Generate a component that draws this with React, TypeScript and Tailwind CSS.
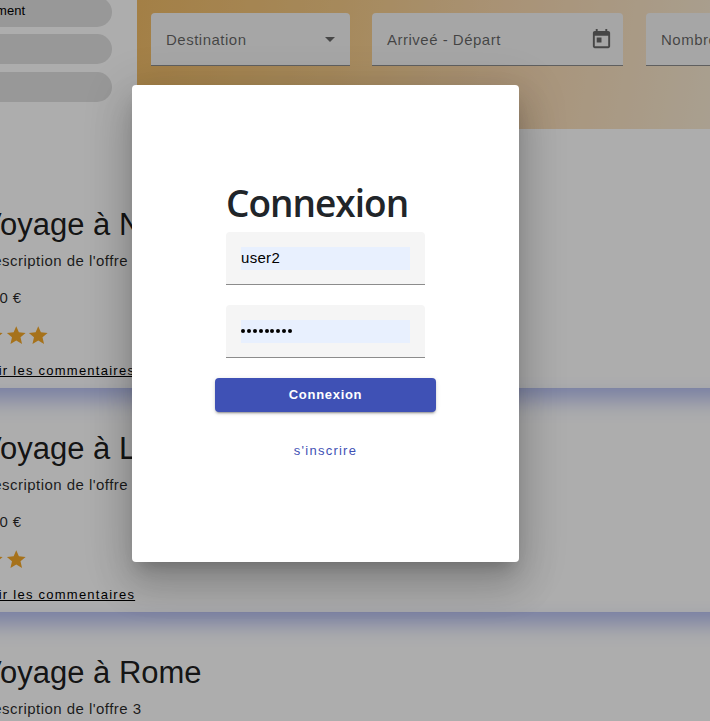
import React from "react";

function Star() {
  return (
    <svg viewBox="0 0 24 24" className="h-[23px] w-[22.5px] shrink-0" fill="#f5a829">
      <path d="M12 17.27L18.18 21l-1.64-7.03L22 9.24l-7.19-.61L12 2 9.19 8.63 2 9.24l5.46 4.73L5.82 21z" />
    </svg>
  );
}

interface OfferProps {
  title: string;
  description: string;
  price: string;
  stars: number;
}

function Offer({ title, description, price, stars }: OfferProps) {
  return (
    <article className="-mx-10 h-[224px] shrink-0 pt-[39px] pl-10 shadow-[0_12px_20px_#b3bdf1]">
      <div className="-ml-[18px] whitespace-nowrap text-black/85">
        <h2 className="-ml-px h-[44px] text-[31px] leading-[44px] text-black/90">{title}</h2>
        <p className="mt-[2px] h-[24px] text-[15px] leading-[24px] tracking-[0.46px]">{description}</p>
        <p className="mt-[13px] h-[24px] text-[15px] leading-[24px] tracking-[0.4px]">{price}</p>
        <div className="mt-[14px] flex h-[24px]">
          {Array.from({ length: stars }, (_, i) => (
            <Star key={i} />
          ))}
        </div>
        <a className="-ml-px mt-[14px] block h-[18px] text-[13px] leading-[18px] tracking-[1.25px] text-black underline decoration-1 underline-offset-[1px]">
          Voir les commentaires
        </a>
      </div>
    </article>
  );
}

function Pill({ children }: { children?: React.ReactNode }) {
  return (
    <div className="-ml-5 flex h-[30px] w-[132px] shrink-0 items-center rounded-r-full bg-[#e0e0e0] text-[13px] text-black">
      {children}
    </div>
  );
}

const field = "flex h-[53px] shrink-0 items-center rounded-t border-b border-[#8c8c8c] bg-[#f5f5f5] px-[15px]";

export default function App() {
  return (
    <div className="relative h-[721px] w-[710px] overflow-hidden bg-white font-['Liberation_Sans',Arial,sans-serif]">
      <div className="flex h-[164px] w-full">
        <aside className="flex w-[137px] shrink-0 flex-col gap-2 overflow-hidden">
          <div className="-mt-[3px] -mb-px">
            <Pill>
              <span className="-mt-[3px] w-[45px] text-right">ment</span>
            </Pill>
          </div>
          <Pill />
          <Pill />
        </aside>
        <header className="flex h-[129px] w-[573px] shrink-0 items-start gap-[22px] overflow-hidden bg-[linear-gradient(100deg,#f1bc67_0%,#f5cb88_35%,#f9d8ae_62%,#faebd4_100%)] pt-[13px] pl-[14px] text-[15px] tracking-[0.5px] text-black/60">
          <div className={field + " w-[199px] justify-between"}>
            <span className="mt-[2px]">Destination</span>
            <svg viewBox="0 0 10 5" className="mt-px h-[5px] w-[10px]" fill="#686868">
              <path d="M0 0h10L5 5z" />
            </svg>
          </div>
          <div className={field + " w-[251px] justify-between"}>
            <span className="mt-[2px]">Arriveé - Départ</span>
            <svg viewBox="0 0 24 24" className="-mr-[5px] h-[23px] w-[23px]" fill="#686868">
              <path d="M19 3h-1V1h-2v2H8V1H6v2H5c-1.11 0-1.99.9-1.99 2L3 19c0 1.1.89 2 2 2h14c1.1 0 2-.9 2-2V5c0-1.100-.9-2-2-2zm0 16H5V8h14v11zM7 10h5v5H7z" />
            </svg>
          </div>
          <div className={field + " ml-px w-[199px]"}>
            <span className="mt-[2px]">Nombre</span>
          </div>
        </header>
      </div>
      <main className="flex flex-col overflow-clip">
        <Offer title="Voyage à New York" description="Description de l'offre 1" price="500 €" stars={3} />
        <Offer title="Voyage à Londres" description="Description de l'offre 2" price="500 €" stars={2} />
        <Offer title="Voyage à Rome" description="Description de l'offre 3" price="500 €" stars={3} />
      </main>

      <div className="absolute inset-0 bg-black/[0.32] pt-[85px] pl-[132px]">
        <section className="flex h-[477px] w-[387px] flex-col rounded bg-white px-[83px] pt-[92px] shadow-[0_11px_15px_-7px_rgba(0,0,0,0.2),0_24px_38px_3px_rgba(0,0,0,0.14),0_9px_46px_8px_rgba(0,0,0,0.12)]">
          <h1 className="ml-[11px] h-[55px] whitespace-nowrap font-['Open_Sans',sans-serif] text-[37px] leading-[52px] font-semibold tracking-[-1px] text-[#212529]">
            Connexion
          </h1>
          <div className={field + " ml-[11px] w-[199px]"}>
            <span className="h-[23px] w-[169px] bg-[#e8f0fe] text-[15px] leading-[22px] tracking-[0.3px] text-black">user2</span>
          </div>
          <div className={field + " mt-5 ml-[11px] w-[199px]"}>
            <span className="flex h-[23px] w-[169px] items-center gap-[1.9px] bg-[#e8f0fe]">
              {Array.from({ length: 9 }, (_, i) => (
                <i key={i} className="size-[4px] rounded-full bg-black" />
              ))}
            </span>
          </div>
          <button className="mt-5 h-[34px] w-[221px] rounded bg-[#3f51b5] text-[13px] font-bold tracking-[0.7px] text-white shadow-[0_3px_1px_-2px_rgba(0,0,0,0.2),0_2px_2px_rgba(0,0,0,0.14),0_1px_5px_rgba(0,0,0,0.12)]">
            Connexion
          </button>
          <a className="mt-[29px] w-[221px] text-center text-[13px] leading-5 tracking-[1.25px] text-[#3f51b5]">s'inscrire</a>
        </section>
      </div>
    </div>
  );
}
